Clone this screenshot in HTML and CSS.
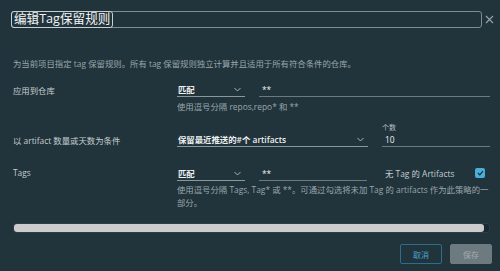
FILE: index.html
```html
<!DOCTYPE html>
<html>
<head>
<meta charset="utf-8">
<link rel="stylesheet" href="styles.css">
</head>
<body>
<div class="modal">
  <div class="header">
    <div class="title-box"><h3 class="title">编辑Tag保留规则</h3></div>
    <span class="close">
      <svg width="9" height="9" viewBox="0 0 9 9"><path d="M1 1L8 8M8 1L1 8" stroke="#9aa6ab" stroke-width="1.1" fill="none"/></svg>
    </span>
  </div>
  <p class="desc">为当前项目指定 tag 保留规则。所有 tag 保留规则独立计算并且适用于所有符合条件的仓库。</p>

  <div class="row row1">
    <div class="label">应用到仓库</div>
    <div class="fields">
      <div class="line">
        <div class="select w-small"><span>匹配</span><svg class="chev" width="7" height="5" viewBox="0 0 7 5"><path d="M0.5 1L3.5 4L6.5 1" stroke="#b8c2c6" stroke-width="0.9" fill="none"/></svg></div>
        <div class="input w-wide">**</div>
      </div>
      <div class="help">使用逗号分隔 repos,repo* 和 **</div>
    </div>
  </div>

  <div class="row row2">
    <div class="label">以 artifact 数量或天数为条件</div>
    <div class="fields">
      <div class="line">
        <div class="select w-big"><span>保留最近推送的#个 artifacts</span><svg class="chev" width="7" height="5" viewBox="0 0 7 5"><path d="M0.5 1L3.5 4L6.5 1" stroke="#b8c2c6" stroke-width="0.9" fill="none"/></svg></div>
        <div class="num">
          <div class="sublabel">个数</div>
          <div class="input w-mid">10</div>
        </div>
      </div>
    </div>
  </div>

  <div class="row row3">
    <div class="label">Tags</div>
    <div class="fields">
      <div class="line">
        <div class="select w-small"><span>匹配</span><svg class="chev" width="7" height="5" viewBox="0 0 7 5"><path d="M0.5 1L3.5 4L6.5 1" stroke="#b8c2c6" stroke-width="0.9" fill="none"/></svg></div>
        <div class="input w-mid">**</div>
        <div class="check">
          <span>无 Tag 的 Artifacts</span>
          <span class="box"><svg width="7" height="6" viewBox="0 0 7 6"><path d="M1 3L2.8 4.8L6 1.2" stroke="#1b2a31" stroke-width="1.2" fill="none"/></svg></span>
        </div>
      </div>
      <div class="help help-wide">使用逗号分隔 Tags, Tag* 或 **。可通过勾选将未加 Tag 的 artifacts 作为此策略的一部分。</div>
    </div>
  </div>

  <div class="progress"><div class="bar"></div></div>

  <div class="footer">
    <button class="btn btn-outline">取消</button>
    <button class="btn btn-disabled">保存</button>
  </div>
</div>
</body>
</html>
```

FILE: styles.css
```css
* { box-sizing: border-box; }
html, body {
  margin: 0;
  padding: 0;
  background: #21333b;
  width: 500px;
  height: 271px;
  overflow: hidden;
}
body {
  font-family: "Open Sans", "Noto Sans CJK SC", sans-serif;
  color: #c5ced2;
  font-size: 8.4px;
}
.modal {
  padding: 11px 0 0 13px;
}
.header {
  display: flex;
  align-items: center;
  margin-left: -2px;
}
.title-box {
  width: 471px;
  height: 17px;
  border: 1px solid #7f8c92;
  border-radius: 3px;
  display: flex;
  align-items: center;
}
.title {
  margin: 0 0 0 -1px;
  height: 17px;
  border: 1px solid #c8cfd2;
  border-radius: 3px;
  padding: 0 2px 0 2px;
  font-weight: 400;
  font-size: 12.6px;
  line-height: 14px;
  color: #f2f4f5;
  font-family: "Open Sans", "Noto Sans CJK SC", sans-serif;
}
.close {
  margin-left: 3px;
  display: flex;
  align-items: center;
}
.desc {
  margin: 30px 0 0 0;
  color: #9ba7ac;
  line-height: 12px;
}
.row {
  display: flex;
}
.label {
  width: 164px;
  flex: none;
  color: #c5ced2;
  line-height: 12px;
}
.fields {
  width: 313px;
}
.line {
  display: flex;
  align-items: flex-end;
}
.select {
  height: 13px;
  border-bottom: 1px solid #8a979c;
  display: flex;
  align-items: center;
  justify-content: space-between;
  padding: 0 4px 1px 0;
  color: #eef1f2;
  font-weight: 600;
  line-height: 12px;
}
.select span { padding-left: 1px; }
.w-small { width: 68px; }
.w-big { width: 191px; }
.w-wide { width: 231px; margin-left: 14px; }
.w-mid { width: 108px; }
.row3 .input.w-mid { margin-left: 14px; }
.input {
  height: 13px;
  border-bottom: 1px solid #6c7a80;
  color: #eef1f2;
  padding: 0 0 1px 3px;
  line-height: 12px;
}
.help {
  color: #9ba7ac;
  line-height: 13px;
  margin-top: 3px;
}
.help-wide { width: 318px; }
.row1 { margin-top: 14px; }
.row1 .label { padding-top: 1px; }
.row2 { margin-top: 10px; }
.row2 .label { padding-top: 12px; }
.num {
  margin-left: 14px;
}
.sublabel {
  font-size: 7px;
  color: #b6c0c4;
  line-height: 9px;
  margin-bottom: 2px;
}
.row3 { margin-top: 19px; }
.row3 .label { padding-top: 1px; }
.check {
  display: flex;
  align-items: center;
  height: 13px;
  margin-left: 18px;
  margin-bottom: 2px;
  color: #c5ced2;
}
.box {
  width: 10px;
  height: 10px;
  background: #49afd9;
  border-radius: 2px;
  margin-left: 21px;
  display: flex;
  align-items: center;
  justify-content: center;
}
.row3 .help { margin-top: 2px; }
.progress {
  margin-top: 14px;
  width: 477px;
  height: 10px;
  border-radius: 3px;
  background: #1b2a31;
  border: 1px solid #2b3e46;
}
.bar {
  width: 470px;
  height: 8px;
  background: #cccccc;
  border-radius: 3px;
}
.footer {
  display: flex;
  justify-content: flex-end;
  gap: 8px;
  margin-top: 11px;
  padding-right: 8px;
}
.btn {
  width: 42px;
  height: 20px;
  border-radius: 2px;
  font-family: "Open Sans", "Noto Sans CJK SC", sans-serif;
  font-size: 8px;
  padding: 0;
}
.btn-outline {
  background: transparent;
  border: 1px solid #2f6d8e;
  color: #49a8d5;
}
.btn-disabled {
  background: #6d7a80;
  border: 1px solid #6d7a80;
  color: #a3adb1;
}
```
